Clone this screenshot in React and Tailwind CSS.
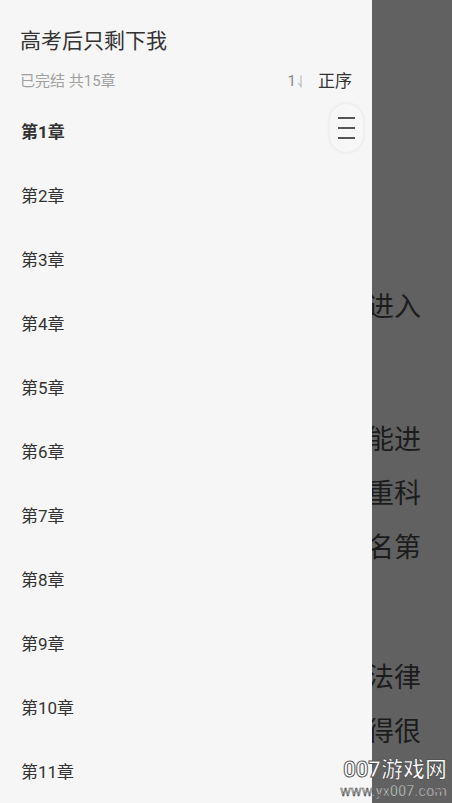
import React from "react";

const chapters = Array.from({ length: 15 }, (_, i) => `第${i + 1}章`);

export default function App() {
  return (
    <div
      className="relative flex h-[803px] w-[452px] overflow-hidden bg-[#616161]"
      style={{ fontFamily: 'Roboto, "Noto Sans CJK SC", sans-serif' }}
    >
      {/* Drawer */}
      <div className="relative z-10 flex w-[372px] shrink-0 flex-col overflow-hidden bg-[#f6f6f6]">
        <div className="pl-[20px] pt-[27px] text-[21px] leading-[28px] text-[#333]">
          高考后只剩下我
        </div>
        <div className="mt-[15px] flex items-center pl-[20px] pr-[20px]">
          <span className="text-[15px] leading-[20px] text-[#a0a0a0]">已完结 共15章</span>
          <span className="ml-auto flex items-center">
            <span className="text-[15px] leading-[20px] text-[#888]">1</span>
            <svg width="8" height="14" viewBox="0 0 8 14" className="ml-[1px]">
              <path d="M4 1.5 V12.5 L1.2 9" stroke="#bbb" strokeWidth="1.2" fill="none" />
            </svg>
            <span className="ml-[13px] text-[17px] leading-[22px] text-[#333]">正序</span>
          </span>
        </div>
        <div className="mt-[9px] flex flex-col">
          {chapters.map((c, i) => (
            <div
              key={c}
              className={`flex h-[64px] shrink-0 items-center pl-[21px] text-[17px] text-[#333] ${
                i === 0 ? "font-bold" : ""
              }`}
            >
              {c}
            </div>
          ))}
        </div>
        {/* scroll thumb */}
        <div className="absolute left-[329px] top-[103px] flex h-[50px] w-[35px] flex-col items-center justify-center gap-[8.5px] rounded-full border border-[#eeeeee] bg-[#f7f7f7] shadow-[0_0_3px_rgba(0,0,0,0.06)]">
          <div className="h-[1.5px] w-[17px] bg-[#555]" />
          <div className="h-[1.5px] w-[17px] bg-[#555]" />
          <div className="h-[1.5px] w-[17px] bg-[#555]" />
        </div>
      </div>

      {/* Dimmed page behind */}
      <div className="flex min-w-0 flex-1 flex-col overflow-hidden pr-[31px] pt-[280px] text-[27px] leading-[54px] text-[#1c1c1c]">
        <div className="flex justify-end whitespace-nowrap">考进入</div>
        <div className="mt-[79px] flex justify-end whitespace-nowrap">可能进</div>
        <div className="flex justify-end whitespace-nowrap">点重科</div>
        <div className="flex justify-end whitespace-nowrap">排名第</div>
        <div className="mt-[76px] flex justify-end whitespace-nowrap">学法律</div>
        <div className="flex justify-end whitespace-nowrap">觉得很</div>
      </div>

      {/* Watermark */}
      <div className="absolute bottom-[4px] right-[5px] z-20 flex flex-col items-end">
        <div className="text-[22px] font-bold leading-[26px] text-white [-webkit-text-stroke:1px_#555]">
          007游戏网
        </div>
        <div className="text-[14px] leading-[16px] tracking-[0.3px] text-white [-webkit-text-stroke:0.6px_#555]">
          www.yx007.com
        </div>
      </div>
    </div>
  );
}
